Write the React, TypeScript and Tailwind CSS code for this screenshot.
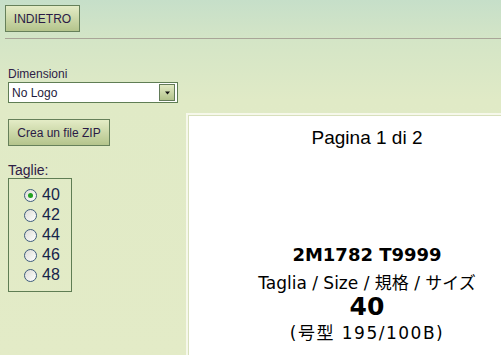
const sizes = ["40", "42", "44", "46", "48"]

function Radio({ checked }: { checked: boolean }) {
  return (
    <span className="flex h-[13px] w-[13px] shrink-0 items-center justify-center rounded-full border border-[#3d5b7c] bg-gradient-to-br from-[#dcdcd6] to-white">
      {checked && <span className="h-[5px] w-[5px] rounded-full bg-[#21a121]" />}
    </span>
  )
}

export default function App() {
  return (
    <div className="relative h-[355px] w-[501px] overflow-hidden bg-[linear-gradient(180deg,#c6dfc9_0px,#d4e5c6_40px,#e0eac6_100px,#e3ebc7_355px)] font-['Liberation_Sans',Arial,sans-serif]">
      <div className="px-[5px] pt-[5px]">
        <button className="h-[27px] w-[75px] border border-[#66805a] bg-gradient-to-b from-[#e4ecc6] to-[#b4c48c] text-[12px] text-[#2a1a45]">
          INDIETRO
        </button>
      </div>
      <div className="ml-[5px] mt-[6px] h-px bg-[#a9a598]" />

      <div className="flex">
        <div className="w-[186px] shrink-0 pl-[8px] pt-[28px]">
          <div className="h-[14px] text-[12px] leading-[14px] text-[#2f2046]">Dimensioni</div>
          <div className="mt-[1px] flex h-[21px] w-[170px] items-center border border-[#5f7d54] bg-white pr-[2px]">
            <span className="flex-1 pl-[3px] text-[12px] text-[#1d1a3c]">No Logo</span>
            <span className="flex h-[17px] w-[16px] items-center justify-center border border-[#627a58] bg-gradient-to-b from-[#e2eac3] to-[#b3c38c]">
              <svg width="7" height="4" viewBox="0 0 7 4">
                <path d="M1 0.5h5L3.5 3.5z" fill="#111" />
              </svg>
            </span>
          </div>

          <button className="mt-[16px] h-[27px] w-[102px] border border-[#66805a] bg-gradient-to-b from-[#e4ecc6] to-[#b4c48c] text-[12px] text-[#2a1a45]">
            Crea un file ZIP
          </button>

          <div className="mt-[16px] h-[16px] text-[14px] leading-[16px] text-[#2f2046]">Taglie:</div>
          <div className="w-[64px] border border-[#5f7d54] pb-[6px] pl-[15px] pt-[6px]">
            {sizes.map((s) => (
              <label key={s} className="flex h-[20px] items-center gap-[5px] text-[16px] text-[#17244a]">
                <Radio checked={s === "40"} />
                {s}
              </label>
            ))}
          </div>
        </div>

        <div className="mt-[74px] w-[362px] shrink-0 border-2 border-[#f6f8eb]">
          <div className="h-[300px] border border-[#d8e0bc] bg-white text-center text-black">
            <div className="pt-[11px] text-[19px] leading-[22px]">Pagina 1 di 2</div>
            <div className="mt-[94px] font-['DejaVu_Sans','Noto_Sans_CJK_JP',sans-serif]">
              <div className="text-[18px] font-bold leading-[24px]">2M1782 T9999</div>
              <div className="mt-[4px] text-[17px] leading-[24px]">Taglia / Size / 規格 / サイズ</div>
              <div className="-mt-[1px] text-[25px] font-bold leading-[26px]">40</div>
              <div className="text-[17px] leading-[26px] tracking-[1.5px]">(号型 195/100B)</div>
            </div>
          </div>
        </div>
      </div>
    </div>
  )
}
